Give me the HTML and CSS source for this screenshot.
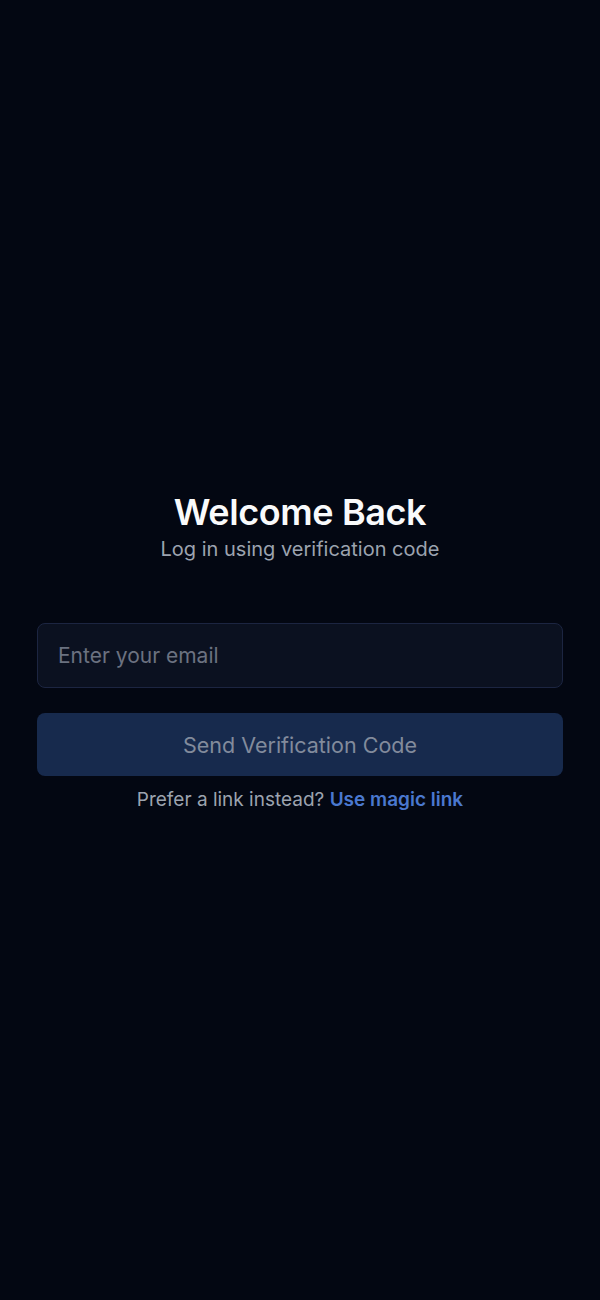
FILE: index.html
```html
<!DOCTYPE html>
<html lang="en">
<head>
<meta charset="utf-8">
<link rel="stylesheet" href="styles.css">
</head>
<body>
<main class="screen">
  <div class="card">
    <h1 class="title">Welcome Back</h1>
    <p class="subtitle">Log in using verification code</p>
    <form class="form">
      <input class="input" type="email" placeholder="Enter your email">
      <button class="button" type="button">Send Verification Code</button>
    </form>
    <p class="alt">Prefer a link instead? <a class="link" href="#">Use magic link</a></p>
  </div>
</main>
</body>
</html>
```
FILE: styles.css
```css
html, body {
  margin: 0;
  padding: 0;
  background: #030712;
}
body {
  font-family: Inter, "Noto Sans", sans-serif;
  -webkit-font-smoothing: antialiased;
}
.screen {
  height: 1300px;
  display: flex;
  align-items: center;
  justify-content: center;
  padding: 4px 37px 0;
  box-sizing: border-box;
}
.card {
  width: 100%;
  display: flex;
  flex-direction: column;
  align-items: center;
}
.title {
  margin: 0;
  font-size: 36px;
  font-weight: 600;
  line-height: 40px;
  color: #f9fafb;
  letter-spacing: -0.4px;
}
.subtitle {
  margin: 4px 0 0;
  font-size: 20px;
  line-height: 26px;
  color: #9ca3af;
}
.form {
  width: 100%;
  margin-top: 61px;
  display: flex;
  flex-direction: column;
  gap: 25px;
}
.input {
  box-sizing: border-box;
  width: 100%;
  height: 65px;
  padding: 0 20px;
  background: #0b1120;
  border: 1px solid #1c2541;
  border-radius: 8px;
  font-family: inherit;
  font-size: 21px;
  color: #e5e7eb;
  outline: none;
}
.input::placeholder {
  color: #6b7280;
}
.button {
  box-sizing: border-box;
  width: 100%;
  height: 63px;
  background: #172a4d;
  border: none;
  border-radius: 8px;
  font-family: inherit;
  font-size: 21.5px;
  color: #828b9c;
}
.alt {
  margin: 12px 0 0;
  font-size: 19px;
  line-height: 24px;
  color: #9ca3af;
}
.link {
  color: #4a78cf;
  font-weight: 600;
  text-decoration: none;
}
```
